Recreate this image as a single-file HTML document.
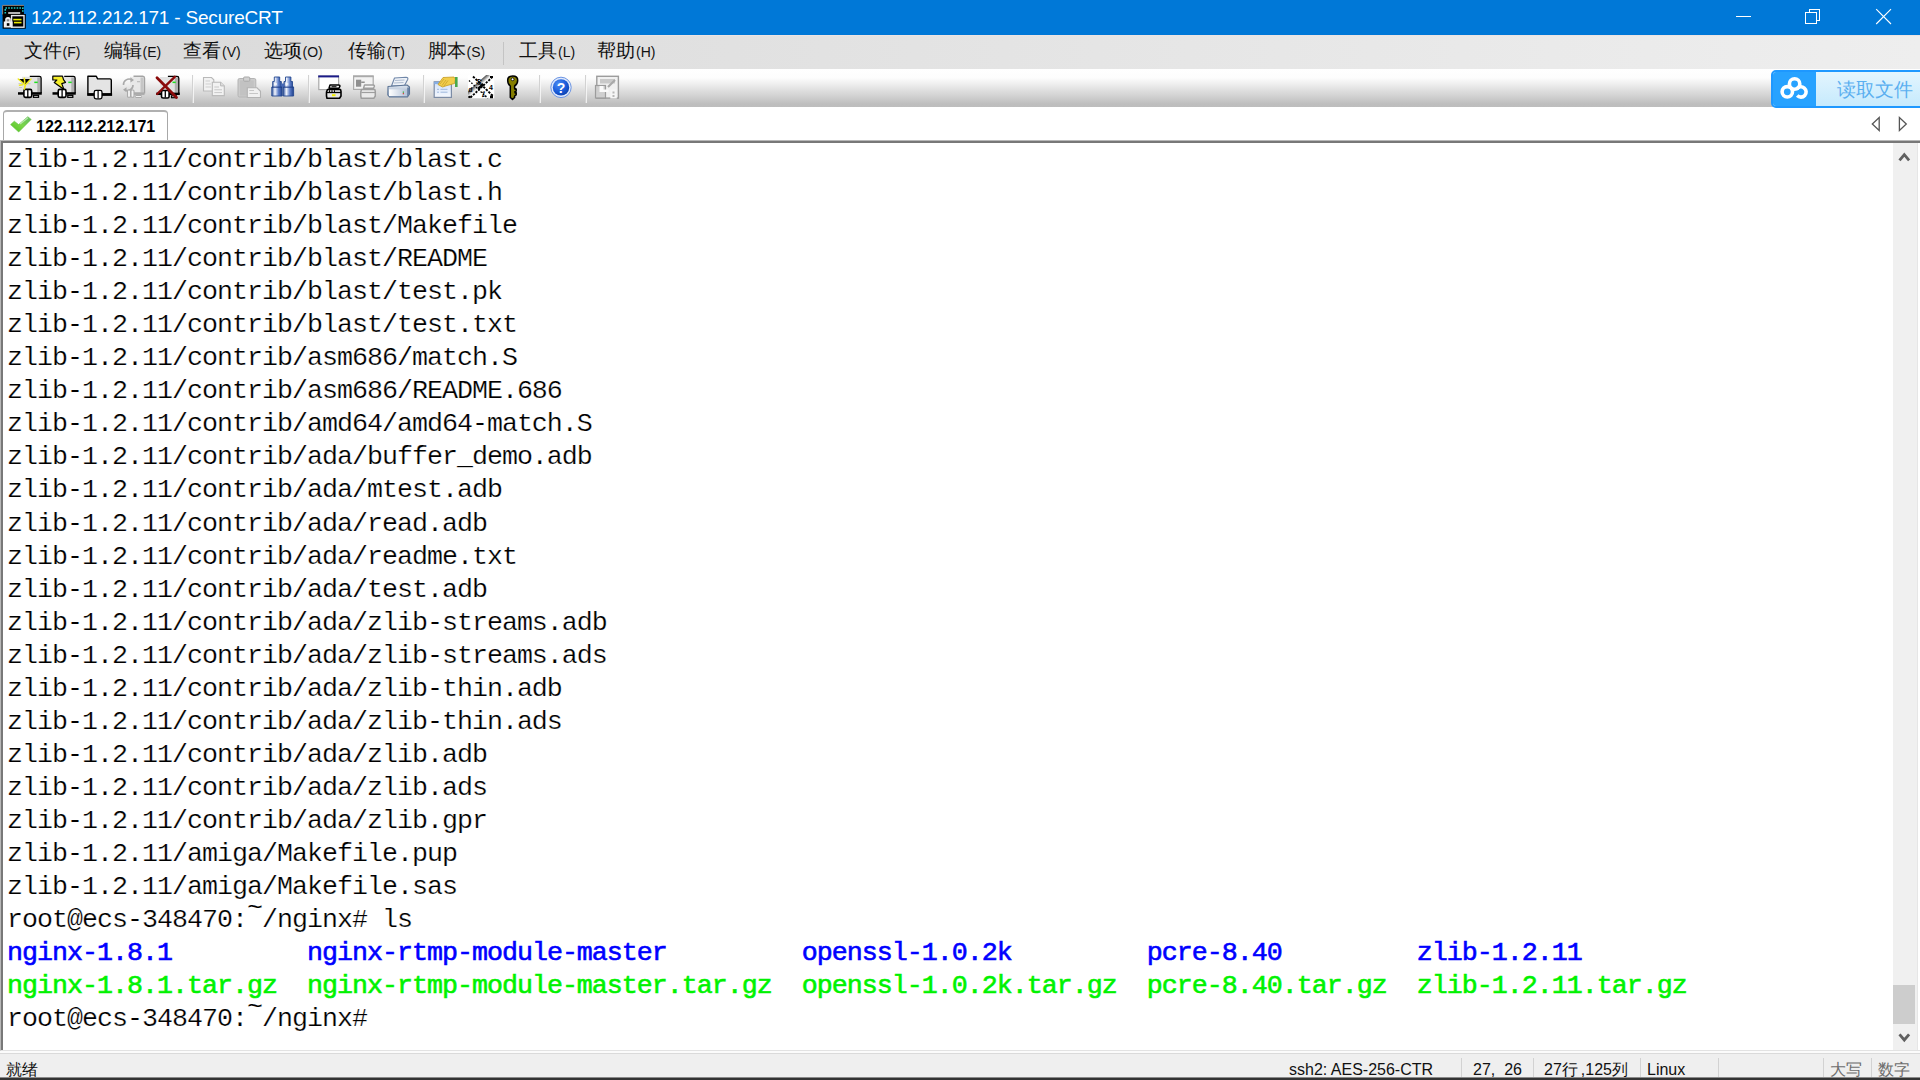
<!DOCTYPE html>
<html><head><meta charset="utf-8">
<style>
*{margin:0;padding:0;box-sizing:border-box}
html,body{width:1920px;height:1080px;overflow:hidden;background:#fff;font-family:"Liberation Sans",sans-serif}
.a{position:absolute}
#title{left:0;top:0;width:1920px;height:36px;background:#0078d7;border-bottom:1px solid #ece4e4}
#ttext{left:31px;top:5.7px;font-size:19px;letter-spacing:-0.2px;color:#fff;line-height:24px;white-space:nowrap}
#menu{left:0;top:36px;width:1920px;height:33px;background:linear-gradient(to right,#d9d9d9 0%,#eeeeee 100%)}
.mi{position:absolute;top:3px;height:24px;line-height:24px;font-size:19px;color:#111;white-space:nowrap}
.cj{display:inline-block;white-space:nowrap}
.mi small{font-size:14px}
#tool{left:0;top:69px;width:1920px;height:38px;background:linear-gradient(to bottom,#ffffff 0%,#fdfdfd 23%,#efefef 39%,#e0e0e0 55%,#d0d0d0 73%,#bebebe 92%,#bdbdbd 100%)}
.sep{position:absolute;top:6px;width:2px;height:27px;background:linear-gradient(to right,#cfcfcf 50%,#f8f8f8 50%)}
#tabbar{left:0;top:107px;width:1920px;height:33px;background:#fff}
#tab{left:3px;top:3px;width:165px;height:30px;border:1px solid #a8a8a8;border-top:2px solid #b0b0b0;border-bottom:none;border-radius:4px 4px 0 0;background:#fff}
#term{left:0;top:140px;width:1920px;height:911px;background:#fff;border-top:1px solid #b8b8b8;border-left:1px solid #b8b8b8;border-bottom:1px solid #e2e2e2}
#term2{left:1px;top:141px;width:1919px;height:909px;background:#fff;border-top:2px solid #787878;border-left:2px solid #787878}
#lines{left:7px;top:144px;font-family:"Liberation Mono",monospace;font-size:26.66px;letter-spacing:-1px;line-height:33.04px;color:#000;white-space:pre;-webkit-text-stroke:0.22px #fff}
.b{color:#0000ff;-webkit-text-stroke:0.6px #0000ff}
.t{position:relative;top:-12px}
.g{color:#00f200;-webkit-text-stroke:0.6px #00f200}
#sb{left:1893px;top:143px;width:25px;height:907px;background:#f0f0f0;border-right:1px solid #e6e6e6}
#thumb{left:1893px;top:985px;width:22px;height:39px;background:#cdcdcd}
#status{left:0;top:1051px;width:1920px;height:29px;background:#efefef;border-top:2px solid #fbfbfb}
#status2{left:0;top:1053px;width:1920px;height:1px;background:#dadada}
.st{position:absolute;top:7px;font-size:16px;line-height:20px;color:#111;white-space:nowrap}
.ssep{position:absolute;top:5px;width:1px;height:24px;background:#d2d2d2}
#taskedge{left:0;top:1077px;width:1920px;height:3px;background:linear-gradient(#8a8a8a 0,#8a8a8a 1px,#333 1px)}
</style></head><body>
<div id="title" class="a"></div>
<div id="ttext" class="a">122.112.212.171 - SecureCRT</div>
<div id="menu" class="a">
 <div class="mi" style="left:23.5px"><span class="cj" style="width:39px">文件</span><small>(F)</small></div>
 <div class="mi" style="left:103.5px"><span class="cj" style="width:39px">编辑</span><small>(E)</small></div>
 <div class="mi" style="left:183px"><span class="cj" style="width:39px">查看</span><small>(V)</small></div>
 <div class="mi" style="left:263.5px"><span class="cj" style="width:39px">选项</span><small>(O)</small></div>
 <div class="mi" style="left:348px"><span class="cj" style="width:39px">传输</span><small>(T)</small></div>
 <div class="mi" style="left:427.5px"><span class="cj" style="width:39px">脚本</span><small>(S)</small></div>
 <div class="mi" style="left:519px"><span class="cj" style="width:39px">工具</span><small>(L)</small></div>
 <div class="mi" style="left:597px"><span class="cj" style="width:39px">帮助</span><small>(H)</small></div>
 <div class="a" style="left:503px;top:6px;width:1px;height:23px;background:#c4c4c4"></div>
</div>
<div id="tool" class="a"></div>
<svg class="a" style="left:0;top:69px" width="640" height="39" viewBox="0 69 640 39">
<!-- separators -->
<g fill="#d2d2d2"><rect x="192" y="75" width="1" height="28"/><rect x="308" y="75" width="1" height="28"/><rect x="423" y="75" width="1" height="28"/><rect x="539" y="75" width="1" height="28"/><rect x="585" y="75" width="1" height="28"/></g>
<g fill="#fafafa" opacity=".8"><rect x="193" y="75" width="1" height="28"/><rect x="309" y="75" width="1" height="28"/><rect x="424" y="75" width="1" height="28"/><rect x="540" y="75" width="1" height="28"/><rect x="586" y="75" width="1" height="28"/></g>
<!-- 1 connect -->
<g transform="translate(18,75)">
 <rect x="4" y="1.8" width="18.5" height="15.5" fill="#e2e2e2"/>
 <rect x="19.3" y="2.5" width="3.2" height="15" fill="#b0b0b0"/>
 <path d="M11.8 1.3 H21.3 Q23.1 1.3 23.1 3.1 V18" fill="none" stroke="#000" stroke-width="1.3"/>
 <rect x="16.3" y="6.6" width="3.4" height="1.5" fill="#1ee01e"/>
 <rect x="0" y="17.2" width="23.8" height="2.5" fill="#000"/>
 <rect x="5.9" y="14.4" width="7.8" height="8" rx="1.6" fill="#fff" stroke="#000" stroke-width="1.6"/>
 <path d="M9.8 15 V22.2" stroke="#000" stroke-width="1.3"/>
 <rect x="15.5" y="20.3" width="5" height="2" fill="#fff" stroke="#000" stroke-width="1.3"/>
 <g stroke="#c4c4c4" stroke-width="1"><path d="M0.5 8.7 H12.5 M1 12.5 H4"/></g>
 <g stroke="#f0ea20" stroke-width="1.6" stroke-linecap="round"><path d="M0.3 4 L7.3 10 L13 4 M6.3 3.4 L6.8 7.8 M7.3 10 L6.4 14 M1.5 10.2 L4.5 9.8"/></g>
</g>
<!-- 2 quick connect -->
<g transform="translate(52,75)">
 <rect x="8" y="1.8" width="14.5" height="15.5" fill="#e2e2e2"/>
 <rect x="19.3" y="2.5" width="3.2" height="15" fill="#b0b0b0"/>
 <path d="M12.2 1.3 H21.3 Q23.1 1.3 23.1 3.1 V18" fill="none" stroke="#000" stroke-width="1.3"/>
 <rect x="16.3" y="6.6" width="3.4" height="1.5" fill="#1ee01e"/>
 <rect x="0.5" y="17.2" width="23.3" height="2.5" fill="#000"/>
 <polygon points="0.8,1.2 10.5,1.2 11.5,4.6 13.5,7.4 9.8,8.6 12,14.6 2.2,7.6 4.8,5 0.8,5" fill="#f5ee2a" stroke="#000" stroke-width="1.2" stroke-linejoin="round"/>
 <rect x="6.2" y="14.4" width="7.8" height="8" rx="1.6" fill="#fff" stroke="#000" stroke-width="1.6"/>
 <path d="M10.1 15 V22.2" stroke="#000" stroke-width="1.3"/>
 <rect x="15.8" y="20.3" width="5" height="2" fill="#fff" stroke="#000" stroke-width="1.3"/>
</g>
<!-- 3 folder -->
<g transform="translate(87,75)">
 <path d="M0.9 1.3 H9.3 L10.6 3.9 H23 Q24.3 3.9 24.3 5.2 V19 H0.9 Z" fill="#e4e4e4" stroke="#000" stroke-width="1.4" stroke-linejoin="round"/>
 <rect x="0.2" y="18.3" width="24.9" height="2.6" fill="#000"/>
 <rect x="7.2" y="15.4" width="7.8" height="8.4" rx="1.8" fill="#fff" stroke="#000" stroke-width="1.3"/>
 <path d="M11.1 16 V23.2" stroke="#000" stroke-width="1.2"/>
</g>
<!-- 4 reconnect (disabled) -->
<g transform="translate(121,75)" opacity="0.95">
 <rect x="9" y="1.8" width="13.5" height="15.5" fill="#e8e8e8"/>
 <rect x="19.5" y="2.5" width="3" height="15" fill="#c4c4c4"/>
 <path d="M12.5 1.2 H21.8 Q23.5 1.2 23.5 3 V18.5" fill="none" stroke="#a0a0a0" stroke-width="1.4"/>
 <rect x="16" y="6" width="3" height="1.3" fill="#bdbdbd"/>
 <rect x="11" y="17.3" width="12.5" height="2.6" fill="#a8a8a8"/>
 <path d="M2.5 10 A5.5 5.5 0 0 1 11 5" fill="none" stroke="#a6a6a6" stroke-width="1.6"/>
 <path d="M9.5 2.5 L13 5 L9.5 7.5 Z" fill="#a6a6a6"/>
 <path d="M12 10 A5.5 5.5 0 0 1 4 15" fill="none" stroke="#a6a6a6" stroke-width="1.6"/>
 <path d="M5.5 12.3 L2 14.8 L5.5 17.3 Z" fill="#a6a6a6"/>
 <rect x="6.5" y="15" width="3" height="7.3" rx="1" fill="#f4f4f4" stroke="#a8a8a8" stroke-width="1.1"/>
 <rect x="10" y="15" width="3" height="7.3" rx="1" fill="#f4f4f4" stroke="#a8a8a8" stroke-width="1.1"/>
 <rect x="15" y="20.5" width="5" height="2" fill="#f4f4f4" stroke="#a8a8a8" stroke-width="1"/>
</g>
<!-- 5 disconnect -->
<g transform="translate(156,75)">
 <rect x="4" y="2" width="18" height="15.5" fill="#e2e2e2"/>
 <rect x="18.8" y="2.5" width="3.2" height="15" fill="#b0b0b0"/>
 <path d="M11.9 1.4 H21 Q22.8 1.4 22.8 3.2 V18.5" fill="none" stroke="#000" stroke-width="1.3"/>
 <rect x="16.5" y="6.6" width="3.2" height="1.5" fill="#1ee01e"/>
 <rect x="0.3" y="17.6" width="23.5" height="2.4" fill="#000"/>
 <rect x="5.5" y="15.5" width="7.6" height="7.5" rx="1.6" fill="#fff" stroke="#000" stroke-width="1.6"/>
 <path d="M9.3 16 V22.5" stroke="#000" stroke-width="1.3"/>
 <rect x="15.5" y="20.8" width="4.8" height="1.9" fill="#fff" stroke="#000" stroke-width="1.2"/>
 <path d="M1 2.8 L20.5 22.4" stroke="#8b0a0a" stroke-width="2.8" stroke-linecap="round"/>
 <path d="M18.8 1.8 L1.2 19" stroke="#8b0a0a" stroke-width="2.4" stroke-linecap="round"/>
</g>
<!-- 6 copy (disabled) -->
<g transform="translate(200,75)">
 <path d="M3.5 2.5 H11.5 L13.8 4.8 V16 H3.5 Z" fill="#f2f2f2" stroke="#b9b9b9" stroke-width="1.1"/>
 <g stroke="#cfcfcf" stroke-width="1"><path d="M5.5 6 H10 M5.5 9 H11 M5.5 12 H11"/></g>
 <path d="M12.3 7.2 H20.6 L24.3 10.9 V20.6 H12.3 Z" fill="#f2f2f2" stroke="#b9b9b9" stroke-width="1.1"/>
 <path d="M20.6 7.2 V10.9 H24.3" fill="#e0e0e0" stroke="#b9b9b9" stroke-width="1"/>
 <g stroke="#c8c8c8" stroke-width="1"><path d="M14.3 12 H19 M14.3 14.8 H22 M14.3 17.6 H22"/></g>
 <rect x="12.8" y="20.6" width="12" height="1" fill="#c9c9c9" opacity=".6"/>
</g>
<!-- 7 paste (disabled) -->
<g transform="translate(235,75)">
 <rect x="3" y="3.5" width="17.8" height="18.5" rx="1.5" fill="#cbcbcb" stroke="#b4b4b4" stroke-width="1"/>
 <rect x="5" y="5.5" width="13.8" height="15" fill="#c2c2c2"/>
 <rect x="8.6" y="2" width="6.2" height="4.2" rx="1" fill="#d0d0d0" stroke="#a9a9a9" stroke-width="1"/>
 <path d="M12.3 12.8 H22 L25.5 16.3 V22.5 H12.3 Z" fill="#f0f0f0" stroke="#b3b3b3" stroke-width="1.1"/>
 <g stroke="#c6c6c6" stroke-width="1"><path d="M14.3 15.5 H19 M14.3 18.5 H23"/></g>
</g>
<!-- 8 binoculars -->
<g transform="translate(271,75)">
 <defs><linearGradient id="bino" x1="0" x2="1"><stop offset="0" stop-color="#2b4f9a"/><stop offset=".3" stop-color="#f2f5fd"/><stop offset=".65" stop-color="#5a7cc8"/><stop offset="1" stop-color="#1f3f8a"/></linearGradient></defs>
 <g fill="url(#bino)" stroke="#24478f" stroke-width="0.9" stroke-linejoin="round">
  <path d="M3.3 2 H8.7 V6.5 H10.3 V12 H11.2 V21 H0.8 V12 H1.7 V6.5 H3.3 Z"/>
  <path d="M14.5 2 H19.9 V6.5 H21.5 V12 H22.6 V21 H12.2 V12 H13 V6.5 H14.5 Z"/>
 </g>
 <rect x="10.3" y="8.5" width="2.7" height="3.5" fill="#4768b5"/>
 <g fill="#1f3f8a"><rect x="1" y="11.6" width="10" height="1.1"/><rect x="12.4" y="11.6" width="10" height="1.1"/></g>
 <g fill="#fff" opacity=".75"><rect x="3" y="8.2" width="3" height="1.6"/><rect x="14.3" y="8.2" width="3" height="1.6"/></g>
</g>
<!-- 9 print screen -->
<g transform="translate(318,75)">
 <rect x="0.8" y="1.2" width="19.8" height="13.4" fill="#fff" stroke="#a9a9a9" stroke-width="1.2"/>
 <rect x="0.2" y="0.4" width="20.8" height="2" fill="#1b1b88"/>
 <path d="M12 10 H20.5 Q22 10 22 11 L21 13.2 H11 Z" fill="#fff" stroke="#000" stroke-width="1.5" stroke-linejoin="round"/>
 <rect x="13.5" y="11.2" width="5" height="1" fill="#000"/>
 <path d="M9.5 14.5 H22.5 L23 16.5 V21 L21.5 23.3 H9 L8.5 21 V17 Z" fill="#e6e6e6" stroke="#000" stroke-width="1.6" stroke-linejoin="round"/>
 <path d="M9 17.5 H23" stroke="#000" stroke-width="1.3"/>
 <g fill="#000"><rect x="11" y="15.2" width="1" height="1.8"/><rect x="13.5" y="15.2" width="1" height="1.8"/><rect x="16" y="15.2" width="1" height="1.8"/></g>
 <rect x="14" y="19.2" width="3.5" height="2" fill="#f1ee00"/>
</g>
<!-- 10 print selection (disabled) -->
<g transform="translate(353,75)">
 <rect x="0.6" y="1.2" width="19.6" height="13.2" fill="#f2f2f2" stroke="#ababab" stroke-width="1.2"/>
 <rect x="0" y="0.4" width="20.6" height="1.8" fill="#a9a9a9"/>
 <rect x="3" y="4.7" width="5.2" height="7" fill="#8f8f8f"/>
 <rect x="8.2" y="6.5" width="3.5" height="1.5" fill="#8f8f8f"/>
 <path d="M11.5 10 H20 Q21.5 10 21.5 11 L20.5 13.2 H10.5 Z" fill="#f4f4f4" stroke="#9e9e9e" stroke-width="1.4" stroke-linejoin="round"/>
 <path d="M8.5 14.5 H21.8 L22.3 16.5 V21 L20.8 23.3 H8.3 L7.8 21 V17 Z" fill="#eaeaea" stroke="#9e9e9e" stroke-width="1.5" stroke-linejoin="round"/>
 <path d="M8.3 17.5 H22.3" stroke="#9e9e9e" stroke-width="1.2"/>
</g>
<!-- 11 printer -->
<g transform="translate(387,75)">
 <defs><linearGradient id="prb" x1="0" y1="0" x2="0" y2="1"><stop offset="0" stop-color="#dfe6f0"/><stop offset="1" stop-color="#8ea2bd"/></linearGradient>
 <linearGradient id="prf" x1="0" x2="1"><stop offset="0" stop-color="#fff"/><stop offset="1" stop-color="#b4c3d8"/></linearGradient></defs>
 <path d="M7.5 3 L19 2.3 Q21.5 2.5 20.7 4.5 L17.5 10.5 L4.5 11 Z" fill="#eef2f8" stroke="#6f86a8" stroke-width="1.1" stroke-linejoin="round"/>
 <g stroke="#a7b6cb" stroke-width="0.9"><path d="M8 5.5 L17.5 5 M7 8 L16.5 7.5"/></g>
 <path d="M1 11.5 L20 10 L22.5 12 V19 L20.5 22 H2.5 L0.8 20 Z" fill="url(#prb)" stroke="#5d7596" stroke-width="1.1" stroke-linejoin="round"/>
 <path d="M2 14.3 H20.2 V21 H2 Z" fill="url(#prf)"/>
 <path d="M20.2 12.5 L22.2 12.5 V19 L20.2 21.5 Z" fill="#6a82a4"/>
 <rect x="15.8" y="16.5" width="1" height="1.3" fill="#1da51d"/><rect x="15.8" y="18" width="1" height="1.3" fill="#d8231f"/>
</g>
<!-- 12 session options -->
<g transform="translate(433,75)">
 <defs><linearGradient id="so" x1="0" y1="0" x2="0" y2="1"><stop offset="0" stop-color="#cfe0fa"/><stop offset="1" stop-color="#f5f8fd"/></linearGradient></defs>
 <rect x="1.2" y="6.8" width="17.2" height="15.6" fill="url(#so)" stroke="#7c8ca6" stroke-width="1.2"/>
 <rect x="1.2" y="6.8" width="17.2" height="2.3" fill="#86aee6"/>
 <g stroke="#9fb7dc" stroke-width="1"><path d="M4 14.3 H6 M7.5 14.3 H14.5 M4 17.2 H6 M7.5 17.2 H14.5"/></g>
 <path d="M5 9.5 L10 2.5 L21 2 L22.5 4 L21.5 8.5 L14 10.5 L9.5 12 Z" fill="#f2cd4a" stroke="#c59a20" stroke-width="0.8" stroke-linejoin="round"/>
 <g stroke="#b08a20" stroke-width="0.6" opacity=".8"><path d="M7 9 L11 4 M9 10.5 L13 5 M11 11 L15 5.5"/></g>
 <rect x="22" y="2" width="2.6" height="10" fill="#4aa84a"/>
</g>
<!-- 13 keymap -->
<g transform="translate(468,75)" clip-path="url(#kmc)">
 <clipPath id="kmc"><rect x="0" y="0" width="26.5" height="23.5"/></clipPath>
 <rect x="0" y="0" width="26.5" height="23.5" fill="#fff"/>
 <defs><linearGradient id="km" gradientUnits="userSpaceOnUse" x1="9" y1="7.8" x2="14.3" y2="13.6"><stop offset="0" stop-color="#3a3a3a"/><stop offset=".55" stop-color="#f4f4f4"/><stop offset="1" stop-color="#fff"/></linearGradient></defs>
 <path d="M1.2 20.5 L22.5 1.5" stroke="url(#km)" stroke-width="8"/>
 <path d="M2.5 22.5 L25 1.5" stroke="#000" stroke-width="1.8" stroke-dasharray="2.2 1.3"/>
 <path d="M5 1.5 L25.5 21.5" stroke="#000" stroke-width="1.9" stroke-dasharray="2.4 1.2"/>
 <path d="M1 5.5 L20 23.5" stroke="#000" stroke-width="1.3" stroke-dasharray="1.6 1.6"/>
 <path d="M10 14 L15.5 9" stroke="#000" stroke-width="2.5"/>
 <g fill="#000" font-family="Liberation Sans" font-weight="bold"><text x="8.5" y="9.5" font-size="8" transform="rotate(20 11 6)">S</text><text x="21" y="14.5" font-size="7">4</text><text x="0.5" y="17" font-size="6.5">d</text><text x="13" y="21.5" font-size="7.5" transform="rotate(-15 16 18)">Z</text></g>
 <g fill="#000"><rect x="0.3" y="20.8" width="2.4" height="2.4"/><rect x="22" y="20.5" width="3" height="3"/><rect x="22" y="1" width="3" height="2"/></g>
</g>
<!-- 14 key -->
<g transform="translate(506,75)">
 <path d="M6.7 0.9 Q11.7 0.9 11.7 5.2 Q11.7 9 8.6 11 V13.5 L10.2 14.5 V16 L8.8 16.8 L10.2 17.8 V19.8 L8.6 21 V22.5 L6.5 24.4 L4.3 22.5 V11 Q1.7 9 1.7 5.2 Q1.7 0.9 6.7 0.9 Z" fill="#857e00" stroke="#000" stroke-width="1.5" stroke-linejoin="round"/>
 <circle cx="6.6" cy="4.3" r="1.4" fill="#fff" stroke="#000" stroke-width="0.8"/>
 <path d="M8.6 14 H10.5 M8.6 18 H10.5" stroke="#000" stroke-width="1.5"/>
</g>
<!-- 15 help -->
<g transform="translate(561,87.4)">
 <defs><radialGradient id="hlp" cx=".35" cy=".3" r=".8"><stop offset="0" stop-color="#4b8cf5"/><stop offset=".6" stop-color="#1a5ad8"/><stop offset="1" stop-color="#0c3fa8"/></radialGradient></defs>
 <circle r="10.2" fill="#dfe9fb" stroke="#6b94e3" stroke-width="1"/>
 <circle r="8.2" fill="url(#hlp)"/>
 <text x="0" y="5.2" text-anchor="middle" fill="#fff" font-family="Liberation Sans" font-weight="bold" font-size="14">?</text>
</g>
<!-- 16 last (disabled) -->
<g transform="translate(595,75)">
 <rect x="1.8" y="1.3" width="21.6" height="21.8" fill="#f0f0f0" stroke="#9c9c9c" stroke-width="1.4"/>
 <rect x="5" y="4" width="15" height="4.5" fill="#c9c9c9"/>
 <rect x="0.5" y="10.5" width="10" height="12.5" fill="#cfcfcf" stroke="#9c9c9c" stroke-width="1.2"/>
 <path d="M4.5 11 H8.5 V14.5 H13.5 V17 H4.5 Z" fill="#fafafa"/>
 <path d="M13 12 L20 5" stroke="#a8a8a8" stroke-width="2.2"/>
 <rect x="15.3" y="14.5" width="6.5" height="9" fill="#f6f6f6"/>
 <rect x="17.5" y="16.5" width="2" height="2" fill="#b8b8b8"/><rect x="17.5" y="20" width="2" height="2" fill="#b8b8b8"/>
</g>
</svg>

<div id="tabbar" class="a"><div id="tab" class="a"></div></div>
<div id="term" class="a"></div><div id="term2" class="a"></div>
<div id="lines" class="a">zlib-1.2.11/contrib/blast/blast.c
zlib-1.2.11/contrib/blast/blast.h
zlib-1.2.11/contrib/blast/Makefile
zlib-1.2.11/contrib/blast/README
zlib-1.2.11/contrib/blast/test.pk
zlib-1.2.11/contrib/blast/test.txt
zlib-1.2.11/contrib/asm686/match.S
zlib-1.2.11/contrib/asm686/README.686
zlib-1.2.11/contrib/amd64/amd64-match.S
zlib-1.2.11/contrib/ada/buffer_demo.adb
zlib-1.2.11/contrib/ada/mtest.adb
zlib-1.2.11/contrib/ada/read.adb
zlib-1.2.11/contrib/ada/readme.txt
zlib-1.2.11/contrib/ada/test.adb
zlib-1.2.11/contrib/ada/zlib-streams.adb
zlib-1.2.11/contrib/ada/zlib-streams.ads
zlib-1.2.11/contrib/ada/zlib-thin.adb
zlib-1.2.11/contrib/ada/zlib-thin.ads
zlib-1.2.11/contrib/ada/zlib.adb
zlib-1.2.11/contrib/ada/zlib.ads
zlib-1.2.11/contrib/ada/zlib.gpr
zlib-1.2.11/amiga/Makefile.pup
zlib-1.2.11/amiga/Makefile.sas
root@ecs-348470:<span class="t">~</span>/nginx# ls
<span class="b">nginx-1.8.1</span>         <span class="b">nginx-rtmp-module-master</span>         <span class="b">openssl-1.0.2k</span>         <span class="b">pcre-8.40</span>         <span class="b">zlib-1.2.11</span>
<span class="g">nginx-1.8.1.tar.gz</span>  <span class="g">nginx-rtmp-module-master.tar.gz</span>  <span class="g">openssl-1.0.2k.tar.gz</span>  <span class="g">pcre-8.40.tar.gz</span>  <span class="g">zlib-1.2.11.tar.gz</span>
root@ecs-348470:<span class="t">~</span>/nginx# </div>
<div id="sb" class="a"></div>
<div id="thumb" class="a"></div>
<div id="status" class="a">
 <div class="st" style="left:6px"><span class="cj" style="width:38px">就绪</span></div>
 <div class="st" style="left:1289px">ssh2: AES-256-CTR</div>
 <div class="ssep" style="left:1461px"></div>
 <div class="st" style="left:1473px;white-space:pre">27,  26</div>
 <div class="ssep" style="left:1533px"></div>
 <div class="st" style="left:1544px">27<span class="cj" style="width:19px">行</span>,125<span class="cj" style="width:19px">列</span></div>
 <div class="ssep" style="left:1640px"></div>
 <div class="st" style="left:1647px">Linux</div>
 <div class="ssep" style="left:1718px"></div>
 <div class="ssep" style="left:1823px"></div>
 <div class="st" style="left:1830px;color:#6d6d6d"><span class="cj" style="width:38px">大写</span></div>
 <div class="ssep" style="left:1871px"></div>
 <div class="st" style="left:1878px;color:#6d6d6d"><span class="cj" style="width:38px">数字</span></div>
</div>
<div id="status2" class="a"></div>
<div id="taskedge" class="a"></div>
<!-- title icon -->
<svg class="a" style="left:0;top:0" width="30" height="34" viewBox="0 0 30 34">
 <rect x="2.6" y="5.3" width="21.3" height="10" fill="#000"/>
 <path d="M2.6 15 V5.4 H23.9" fill="none" stroke="#a58a78" stroke-width="0.9"/>
 <path d="M5.3 13.5 V8 H22.8 V13" fill="none" stroke="#19c9c9" stroke-width="1.6" stroke-dasharray="1.6 1.2"/>
 <rect x="8.2" y="12" width="12" height="2.2" fill="#b4b4b4"/>
 <rect x="2.6" y="14" width="23.2" height="14.7" fill="#000"/>
 <rect x="11.6" y="15.6" width="12.4" height="11.6" fill="none" stroke="#e8e8e8" stroke-width="1.4"/>
 <rect x="13.3" y="18.8" width="8.2" height="1.6" fill="#e9e900"/>
 <rect x="14" y="21.8" width="7.5" height="1.6" fill="#e9e900"/>
 <path d="M3.8 27.5 V21.5 H5.2 V19.5 Q5.2 17 8 17 Q10.8 17 10.8 19.5 V21.5 H12.6 V27.5 Z" fill="#f2f2f2"/>
 <rect x="6.7" y="19.2" width="2.6" height="2.2" fill="#8a8a8a"/>
 <rect x="6.8" y="23.2" width="2.6" height="2.6" fill="#000"/>
</svg>
<!-- window controls -->
<svg class="a" style="left:1720px;top:0" width="200" height="34" viewBox="0 0 200 34">
 <rect x="16" y="16" width="15" height="1" fill="#fff"/>
 <rect x="89.5" y="9.5" width="10" height="11" fill="none" stroke="#fff" stroke-width="1"/>
 <rect x="85.5" y="12.5" width="11" height="11" fill="#0078d7" stroke="#fff" stroke-width="1"/>
 <path d="M156.2 9.2 L171 24 M171 9.2 L156.2 24" stroke="#fff" stroke-width="1.1"/>
</svg>
<!-- tab check + text -->
<svg class="a" style="left:8px;top:114px" width="26" height="22" viewBox="8 114 26 22">
 <defs><linearGradient id="chk" x1="0" y1="1" x2="1" y2="0"><stop offset="0" stop-color="#4fc21a"/><stop offset=".5" stop-color="#7bd64a"/><stop offset="1" stop-color="#5cb860"/></linearGradient></defs>
 <path d="M10.6 124.6 L14.3 121.2 L18.6 124.6 L27.8 116.7 L31.2 119.4 L18.7 132 Z" fill="url(#chk)" stroke="#5fc040" stroke-width="0.6" stroke-linejoin="round"/>
 <path d="M20 124 L28 117.8" stroke="#c9efc0" stroke-width="1.3" opacity=".8"/>
</svg>
<div class="a" style="left:36px;top:117px;font-size:16px;font-weight:bold;line-height:20px;color:#000;white-space:nowrap">122.112.212.171</div>
<!-- tab nav arrows -->
<svg class="a" style="left:1866px;top:112px" width="48" height="24" viewBox="1866 112 48 24">
 <path d="M1879.2 117.5 V130.5 L1872.3 124 Z" fill="none" stroke="#555" stroke-width="1.3" stroke-linejoin="miter"/>
 <path d="M1899.4 117.5 V130.5 L1906.3 124 Z" fill="none" stroke="#555" stroke-width="1.3" stroke-linejoin="miter"/>
</svg>
<!-- scrollbar arrows -->
<svg class="a" style="left:1893px;top:143px" width="24" height="906" viewBox="1893 143 24 906">
 <path d="M1899.5 160.3 L1904.3 154.6 L1909.1 160.3" fill="none" stroke="#606060" stroke-width="2.8"/>
 <path d="M1899.5 1034.3 L1904.3 1040 L1909.1 1034.3" fill="none" stroke="#606060" stroke-width="2.8"/>
</svg>
<!-- baidu button -->
<div class="a" style="left:1771px;top:70px;width:160px;height:38px;border:2px solid #1e98ff;border-radius:5px;background:linear-gradient(to bottom,#e3f5fe,#c6eafd);overflow:hidden">
 <div class="a" style="left:0;top:0;width:43px;height:36px;background:#27a2ff"></div>
 <div class="a" style="left:64px;top:7px;font-size:19px;line-height:22px;color:#5aaff0;white-space:nowrap"><span class="cj" style="width:74px">读取文件</span></div>
</div>
<svg class="a" style="left:1774px;top:72px" width="40" height="34" viewBox="1774 72 40 34">
 <g fill="none" stroke="#fff" stroke-width="3.6">
  <circle cx="1794.6" cy="84" r="5.2"/>
  <circle cx="1787.3" cy="91.8" r="5.2"/>
  <path d="M1797.2 95.6 A5.2 5.2 0 1 0 1796.8 88.8"/>
 </g>
</svg>

</body></html>
